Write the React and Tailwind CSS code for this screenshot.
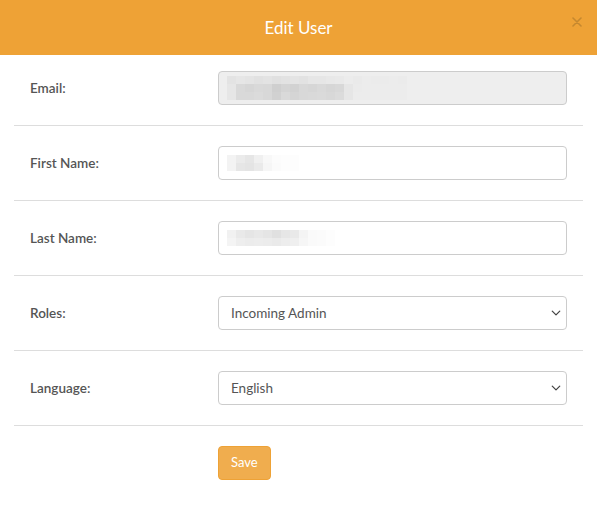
import React from 'react';

const font = { fontFamily: '"Source Sans Pro", Lato, "Liberation Sans", sans-serif' };

function Row({ label, children, first }) {
  return (
    <div className={`flex items-center border-b border-[#dddddd] ${first ? 'pt-4 pb-5' : 'py-5'}`}>
      <label className="w-[204px] pl-[16px] text-[13.5px] font-semibold text-[#555555]">{label}</label>
      <div className="w-[349px]">{children}</div>
    </div>
  );
}

function Blur({ blocks }) {
  // pixelated placeholder for the blurred personal data
  return (
    <div className="flex flex-col">
      {blocks.map((row, i) => (
        <div key={i} className="flex h-[8px]">
          {row.map((c, j) => (
            <div key={j} className="h-[8px] w-[9px]" style={{ backgroundColor: c }} />
          ))}
        </div>
      ))}
    </div>
  );
}

function Chevron() {
  return (
    <svg width="10" height="10" viewBox="0 0 16 16" className="pointer-events-none absolute right-[6px] top-1/2 -translate-y-1/2">
      <path d="M2 5l6 6 6-6" fill="none" stroke="#444" strokeWidth="2" strokeLinecap="round" strokeLinejoin="round" />
    </svg>
  );
}

export default function App() {
  const emailBlur = [
    ['#e3e3e3', '#e6e6e6', '#e4e4e4', '#e1e1e1', '#e3e3e3', '#e0e0e0', '#e2e2e2', '#e4e4e4', '#e2e2e2', '#e6e6e6', '#e6e6e6', '#e8e8e8', '#e9e9e9', '#ececec', '#eaeaea', '#ececec', '#ebebeb', '#ebebeb', '#ececec', '#ebebeb'],
    ['#e6e6e6', '#d9d9d9', '#d6d6d6', '#d9d9d9', '#d8d8d8', '#cfcfcf', '#d4d4d4', '#d2d2d2', '#d8d8d8', '#d6d6d6', '#d9d9d9', '#d6d6d6', '#d8d8d8', '#e6e6e6', '#ebebeb', '#ececec', '#ececec', '#ececec', '#ececec', '#ececec'],
    ['#e6e6e6', '#d9d9d9', '#d9d9d9', '#dbdbdb', '#d8d8d8', '#d1d1d1', '#d9d9d9', '#d5d5d5', '#d8d8d8', '#d9d9d9', '#dadada', '#d8d8d8', '#dbdbdb', '#e6e6e6', '#ececec', '#ececec', '#ececec', '#ececec', '#ececec', '#ececec'],
  ];
  const firstBlur = [
    ['#f3f3f3', '#ebebeb', '#e6e6e6', '#f0f0f0', '#f8f8f8', '#fcfcfc', '#fdfdfd', '#fdfdfd', '#ffffff', '#ffffff', '#ffffff', '#ffffff', '#ffffff', '#ffffff', '#ffffff', '#ffffff', '#ffffff', '#ffffff', '#ffffff', '#ffffff'],
    ['#f3f3f3', '#e6e6e6', '#e4e4e4', '#eaeaea', '#f6f6f6', '#fbfbfb', '#fdfdfd', '#fdfdfd', '#ffffff', '#ffffff', '#ffffff', '#ffffff', '#ffffff', '#ffffff', '#ffffff', '#ffffff', '#ffffff', '#ffffff', '#ffffff', '#ffffff'],
  ];
  const lastBlur = [
    ['#f1f1f1', '#e9e9e9', '#e5e5e5', '#e8e8e8', '#e5e5e5', '#e0e0e0', '#e6e6e6', '#e9e9e9', '#f4f4f4', '#fafafa', '#fbfbfb', '#fdfdfd', '#ffffff', '#ffffff', '#ffffff', '#ffffff', '#ffffff', '#ffffff', '#ffffff', '#ffffff'],
    ['#f4f4f4', '#eeeeee', '#ececec', '#ededed', '#ececec', '#eaeaea', '#ededed', '#efefef', '#f6f6f6', '#fafafa', '#fbfbfb', '#fdfdfd', '#ffffff', '#ffffff', '#ffffff', '#ffffff', '#ffffff', '#ffffff', '#ffffff', '#ffffff'],
  ];

  return (
    <div className="h-[505px] w-[597px] bg-white" style={font}>
      {/* Header */}
      <div className="relative flex h-[55px] items-center justify-center bg-[#eea236]">
        <h4 className="text-[17px] text-white">Edit User</h4>
        <button className="absolute right-[15px] top-[17px]">
          <svg width="10" height="10" viewBox="0 0 10 10">
            <path d="M1 1l8 8M9 1l-8 8" stroke="#c5882f" strokeWidth="1.6" strokeLinecap="round" />
          </svg>
        </button>
      </div>

      {/* Body */}
      <div className="px-[14px]">
        <Row label="Email:" first>
          <div className="flex h-[34px] items-center rounded-[4px] border border-[#cccccc] bg-[#eeeeee] px-[8px]">
            <Blur blocks={emailBlur} />
          </div>
        </Row>
        <Row label="First Name:">
          <div className="flex h-[34px] items-center rounded-[4px] border border-[#cccccc] bg-white px-[8px]">
            <Blur blocks={firstBlur} />
          </div>
        </Row>
        <Row label="Last Name:">
          <div className="flex h-[34px] items-center rounded-[4px] border border-[#cccccc] bg-white px-[8px]">
            <Blur blocks={lastBlur} />
          </div>
        </Row>
        <Row label="Roles:">
          <div className="relative">
            <select
              defaultValue="Incoming Admin"
              className="h-[34px] w-full appearance-none rounded-[4px] border border-[#cccccc] bg-white px-[12px] text-[13.5px] text-[#555555] outline-none"
            >
              <option>Incoming Admin</option>
              <option>Admin</option>
              <option>User</option>
            </select>
            <Chevron />
          </div>
        </Row>
        <Row label="Language:">
          <div className="relative">
            <select
              defaultValue="English"
              className="h-[34px] w-full appearance-none rounded-[4px] border border-[#cccccc] bg-white px-[12px] text-[13.5px] text-[#555555] outline-none"
            >
              <option>English</option>
              <option>Español</option>
              <option>Français</option>
            </select>
            <Chevron />
          </div>
        </Row>
        <div className="pl-[204px] pt-[20px]">
          <button className="h-[34px] rounded-[4px] border border-[#eea236] bg-[#f0ad4e] px-[12px] text-[13px] text-white">
            Save
          </button>
        </div>
      </div>
    </div>
  );
}
